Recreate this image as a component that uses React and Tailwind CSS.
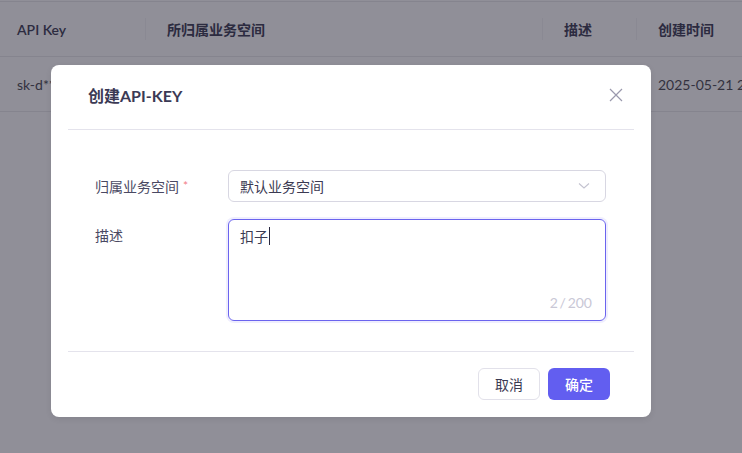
import React from "react";

export default function App() {
  const font = { fontFamily: "Lato, 'Noto Sans CJK SC', sans-serif" };
  return (
    <div className="relative w-[742px] h-[453px] overflow-hidden bg-[#908f98]" style={font}>
      {/* background table */}
      <div className="border-t border-[#85848e] mt-[1px]">
        <div className="flex items-center h-[55px] border-b border-[#85848e] text-[14px] font-semibold text-[#2c2b40]">
          <div className="w-[146px] shrink-0 pl-[17px] border-r border-[#8a8993] h-[22px] flex items-center">API Key</div>
          <div className="w-[397px] shrink-0 pl-[21px] border-r border-[#8a8993] h-[22px] flex items-center">所归属业务空间</div>
          <div className="w-[94px] shrink-0 pl-[21px] border-r border-[#8a8993] h-[22px] flex items-center">描述</div>
          <div className="pl-[21px] h-[22px] flex items-center whitespace-nowrap">创建时间</div>
        </div>
        <div className="flex items-center h-[55px] border-b border-[#85848e] text-[14px] text-[#33323f]">
          <div className="w-[146px] shrink-0 pl-[17px]">sk-d**</div>
          <div className="w-[397px] shrink-0"></div>
          <div className="w-[94px] shrink-0"></div>
          <div className="pl-[21px] whitespace-nowrap shrink-0">2025-05-21 22:00</div>
        </div>
      </div>

      {/* modal */}
      <div className="absolute left-[51px] top-[65px] w-[600px] h-[352px] bg-white rounded-[8px] flex flex-col shadow-[0_2px_6px_rgba(0,0,0,0.08)]">
        <div className="mx-[17px] h-[65px] border-b border-[#e4e3ec] flex items-center justify-between pl-[20px] pr-[10px]">
          <div className="text-[16px] font-bold text-[#3b3a55] mt-[-2px]">创建API-KEY</div>
          <svg width="16" height="16" viewBox="0 0 16 16" className="mt-[-4px]">
            <path d="M2 2 L14 14 M14 2 L2 14" stroke="#9a99ad" strokeWidth="1.2" fill="none" />
          </svg>
        </div>
        <div className="pl-[44px] pr-[45px] pt-[40px] flex flex-col gap-[17px] h-[221px]">
          <div className="flex items-center">
            <div className="w-[133px] text-[14px] text-[#4a4963] flex items-center">
              归属业务空间<span className="ml-[4px] text-[#f27c86] text-[12px]">*</span>
            </div>
            <div className="w-[378px] h-[32px] border border-[#d8d7e2] rounded-[6px] flex items-center justify-between pl-[11px] pr-[15px]">
              <span className="text-[14px] text-[#3b3a52]">默认业务空间</span>
              <svg width="12" height="8" viewBox="0 0 12 8">
                <path d="M1 1.5 L6 6 L11 1.5" stroke="#c4c3d0" strokeWidth="1.1" fill="none" />
              </svg>
            </div>
          </div>
          <div className="flex items-start">
            <div className="w-[133px] text-[14px] text-[#4a4963] pt-[6px]">描述</div>
            <div className="relative w-[378px] h-[102px] border border-[#6b64ee] rounded-[6px] shadow-[0_0_0_2px_#efeefe] pl-[11px] pt-[6px]">
              <div className="flex items-center text-[14px] text-[#3b3a52] h-[20px]">
                扣子<span className="inline-block w-[1px] h-[18px] bg-[#2a2940] ml-[1px]"></span>
              </div>
              <div className="absolute right-[13px] bottom-[7px] text-[14px] text-[#c9c8d6]">2{"\u2009"}/{"\u2009"}200</div>
            </div>
          </div>
        </div>
        <div className="mx-[17px] border-t border-[#e4e3ec] flex justify-end items-center gap-[8px] pt-[16px] pr-[24px]">
          <button className="w-[62px] h-[32px] border border-[#e2e1ea] rounded-[6px] bg-white text-[14px] text-[#3b3a52]">取消</button>
          <button className="w-[62px] h-[32px] rounded-[6px] bg-[#625ef0] text-[14px] text-white font-medium">确定</button>
        </div>
      </div>
    </div>
  );
}
